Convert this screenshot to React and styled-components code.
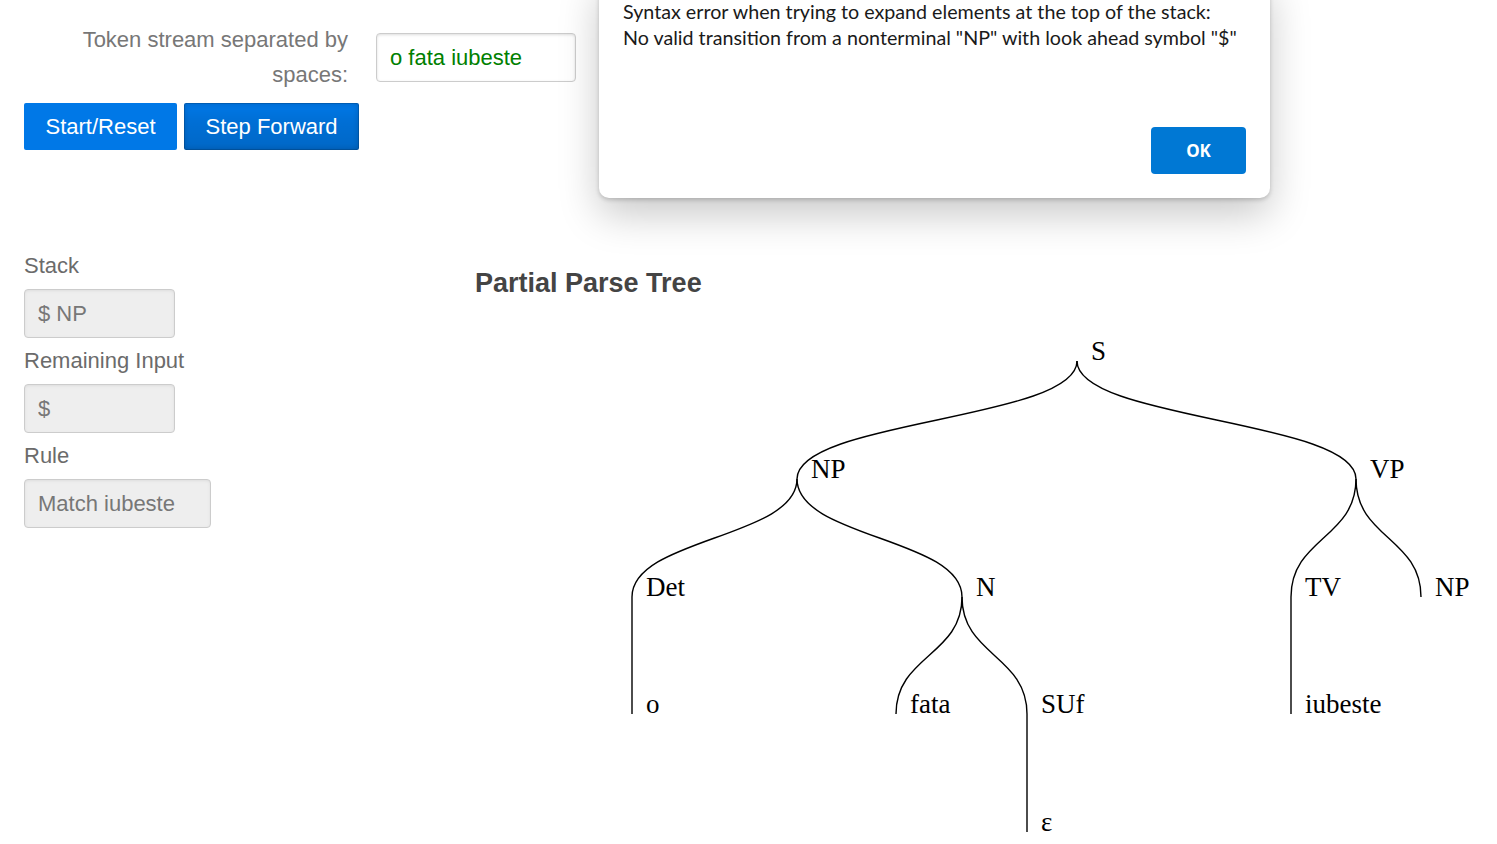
import React from 'react';
import styled, { createGlobalStyle } from 'styled-components';

const GlobalStyle = createGlobalStyle`
  html, body {
    margin: 0;
    padding: 0;
    background: #fff;
    overflow: hidden;
  }
  body {
    font-family: "Liberation Sans", Arial, sans-serif;
    font-size: 22px;
  }
`;

const Page = styled.div`
  position: relative;
  width: 1497px;
  height: 844px;
  padding: 22px 0 0 24px;
  box-sizing: border-box;
`;

const TokenRow = styled.div`
  display: flex;
  align-items: center;
`;

const TokenLabel = styled.label`
  width: 324px;
  text-align: right;
  line-height: 35px;
  color: #777;
  margin-right: 28px;
`;

const TextInput = styled.input`
  box-sizing: border-box;
  width: ${(p) => p.$width || 200}px;
  height: 49px;
  padding: 1px 13px 0;
  border: 1px solid #ccc;
  border-radius: 4px;
  box-shadow: inset 0 1px 3px #ddd;
  font: inherit;
  font-size: 22px;
  color: ${(p) => (p.readOnly ? '#777' : 'green')};
  background: ${(p) => (p.readOnly ? '#eee' : '#fff')};
  outline: none;
`;

const ButtonRow = styled.div`
  display: flex;
  gap: 7px;
  margin-top: 11px;
`;

const Button = styled.button`
  height: 47px;
  padding: 0 21.5px;
  border: none;
  border-radius: 2px;
  font: inherit;
  font-size: 22px;
  color: #fff;
  background-color: rgb(0, 120, 231);
  ${(p) =>
    p.$active &&
    `
    background-image: linear-gradient(transparent, rgba(0,0,0,0.08) 40%, rgba(0,0,0,0.14));
    box-shadow: 0 0 0 1px rgba(0,0,0,0.15) inset, 0 0 6px rgba(0,0,0,0.2) inset;
  `}
`;

const Lower = styled.div`
  display: flex;
  margin-top: 94px;
`;

const SidePanel = styled.div`
  width: 451px;
  display: flex;
  flex-direction: column;
  align-items: flex-start;
`;

const FieldLabel = styled.label`
  display: block;
  line-height: 26px;
  padding: 10px 0;
  color: #6b6b6b;
  &:first-child {
    padding-top: 9px;
  }
`;

const TreePanel = styled.div`
  display: flex;
  flex-direction: column;
`;

const TreeTitle = styled.h3`
  margin: 23px 0 0 0;
  font-size: 27px;
  line-height: 33px;
  font-weight: bold;
  color: #444;
`;

const TreeSvg = styled.svg`
  display: block;
  overflow: visible;
  text {
    font-family: "Liberation Serif", "Times New Roman", serif;
    font-size: 27px;
    fill: #000;
  }
  path {
    fill: none;
    stroke: #000;
    stroke-width: 1.4;
  }
`;

const Modal = styled.div`
  position: absolute;
  left: 599px;
  top: -25px;
  width: 671px;
  height: 223px;
  box-sizing: border-box;
  padding: 24px;
  display: flex;
  flex-direction: column;
  background: #fff;
  border-radius: 10px;
  box-shadow: 0 16px 40px rgba(0, 0, 0, 0.22), 0 2px 4px rgba(0, 0, 0, 0.18);
`;

const ModalText = styled.p`
  margin: 0;
  font-family: Lato, "Noto Sans", sans-serif;
  font-size: 19.7px;
  line-height: 26px;
  color: #1a1a1a;
`;

const ModalButton = styled.button`
  align-self: flex-end;
  margin-top: auto;
  width: 95px;
  height: 47px;
  border: none;
  border-radius: 4px;
  background: #0078d4;
  color: #fff;
  font-family: "Noto Sans", sans-serif;
  font-weight: bold;
  font-size: 17px;
`;

// tree node positions (svg coordinates)
const nodes = {
  S: { x: 602, y: 61, label: 'S' },
  NP: { x: 322, y: 179, label: 'NP', parent: 'S' },
  VP: { x: 881, y: 179, label: 'VP', parent: 'S' },
  Det: { x: 157, y: 297, label: 'Det', parent: 'NP' },
  N: { x: 487, y: 297, label: 'N', parent: 'NP' },
  TV: { x: 816, y: 297, label: 'TV', parent: 'VP' },
  NP2: { x: 946, y: 297, label: 'NP', parent: 'VP' },
  o: { x: 157, y: 414, label: 'o', parent: 'Det' },
  fata: { x: 421, y: 414, label: 'fata', parent: 'N' },
  SUf: { x: 552, y: 414, label: 'SUf', parent: 'N' },
  iubeste: { x: 816, y: 414, label: 'iubeste', parent: 'TV' },
  eps: { x: 552, y: 532, label: 'ε', parent: 'SUf' },
};

function linkPath(a, b) {
  const my = (a.y + b.y) / 2;
  return `M${a.x},${a.y}C${a.x},${my} ${b.x},${my} ${b.x},${b.y}`;
}

function ParseTree() {
  const list = Object.values(nodes);
  return (
    <TreeSvg width="1022" height="544">
      {list
        .filter((n) => n.parent)
        .map((n, i) => (
          <path key={'l' + i} d={linkPath(nodes[n.parent], n)} />
        ))}
      {list.map((n, i) => (
        <text key={'t' + i} x={n.x + 14} y={n.y - 1}>
          {n.label}
        </text>
      ))}
    </TreeSvg>
  );
}

export default function App() {
  return (
    <Page>
      <GlobalStyle />
      <TokenRow>
        <TokenLabel>Token stream separated by spaces:</TokenLabel>
        <TextInput $width={200} defaultValue="o fata iubeste" />
      </TokenRow>
      <ButtonRow>
        <Button>Start/Reset</Button>
        <Button $active>Step Forward</Button>
      </ButtonRow>
      <Lower>
        <SidePanel>
          <FieldLabel>Stack</FieldLabel>
          <TextInput readOnly $width={151} value="$ NP" />
          <FieldLabel>Remaining Input</FieldLabel>
          <TextInput readOnly $width={151} value="$" />
          <FieldLabel>Rule</FieldLabel>
          <TextInput readOnly $width={187} value="Match iubeste" />
        </SidePanel>
        <TreePanel>
          <TreeTitle>Partial Parse Tree</TreeTitle>
          <ParseTree />
        </TreePanel>
      </Lower>
      <Modal>
        <ModalText>
          Syntax error when trying to expand elements at the top of the stack:
          <br />
          No valid transition from a nonterminal "NP" with look ahead symbol "$"
        </ModalText>
        <ModalButton>OK</ModalButton>
      </Modal>
    </Page>
  );
}
